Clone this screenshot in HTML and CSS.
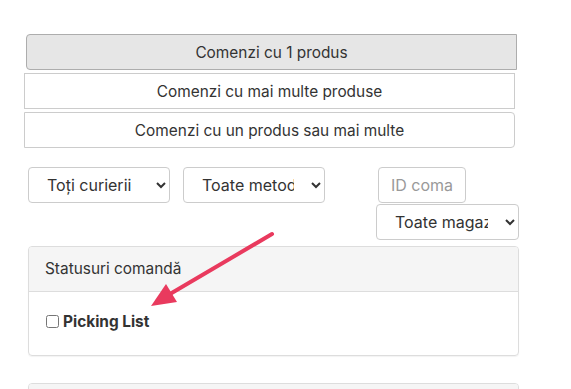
FILE: index.html
```html
<!DOCTYPE html>
<html lang="en">
<head>
    <meta charset="UTF-8">
    <meta name="viewport" content="width=device-width, initial-scale=1.0">
    <title>Comenzi</title>
    <link rel="stylesheet" href="styles.css">
</head>
<body>

    <div class="page">
        <div class="btn-group">
            <button class="btn active">Comenzi cu 1 produs</button>
            <button class="btn">Comenzi cu mai multe produse</button>
            <button class="btn last">Comenzi cu un produs sau mai multe</button>
        </div>

        <div class="filters">
            <select class="field courier">
                <option>Toți curierii</option>
            </select>
            <select class="field method">
                <option>Toate metodele</option>
            </select>
            <div class="filter-stack">
                <input type="text" class="field order-id" placeholder="ID comanda">
                <select class="field shop">
                    <option>Toate magazinele</option>
                </select>
            </div>
        </div>

        <div class="card">
            <div class="card-header">Statusuri comandă</div>
            <div class="card-body">
                <label class="check"><input type="checkbox"> Picking List</label>
            </div>
        </div>

        <div class="card next">
            <div class="card-header">&nbsp;</div>
        </div>

        <!-- annotation arrow pointing at the checkbox -->
        <svg class="arrow" width="140" height="90" viewBox="0 0 140 90">
            <line x1="132" y1="9" x2="30" y2="69" stroke="#e93a5e" stroke-width="4" stroke-linecap="round"/>
            <polygon points="11,81 37,77 26,59" fill="#e93a5e"/>
        </svg>
    </div>

</body>
</html>
```

FILE: styles.css
```css
* {
  box-sizing: border-box;
}

body {
  margin: 0;
  background: #fff;
  color: #333;
  font-family: Inter, "Noto Sans", sans-serif;
  font-size: 15.4px;
}

.page {
  position: relative;
  height: 389px;
  overflow: hidden;
  padding: 34px 0 0 24px;
}

.btn-group {
  display: flex;
  flex-direction: column;
  gap: 3px;
}

.btn {
  display: block;
  width: 491px;
  height: 36px;
  padding: 6px 12px;
  background: #fff;
  border: 1px solid #ccc;
  border-radius: 0;
  color: #333;
  font-family: inherit;
  font-size: 15.4px;
  text-align: center;
}

.btn.active {
  margin-left: 2px;
  background: #e6e6e6;
  border-color: #adadad;
  border-radius: 4px 0 0 4px;
}

.btn.last {
  border-radius: 0 4px 4px 0;
}

.filters {
  display: flex;
  align-items: flex-start;
  padding: 19px 0 0 4px;
}

.field {
  flex-shrink: 0;
  height: 36px;
  border: 1px solid #ccc;
  border-radius: 4px;
  background: #fff;
  color: #333;
  font-family: inherit;
  font-size: 16px;
}

select.field {
  padding: 0 14px 0 14px;
}

.courier {
  width: 142px;
}

.method {
  width: 142px;
  margin-left: 13px;
}

.filter-stack {
  flex-shrink: 0;
  display: flex;
  flex-direction: column;
  align-items: flex-start;
  gap: 1px;
  margin-left: 51px;
}

.order-id {
  width: 88px;
  margin-left: 2px;
  padding: 0 12px;
}

.order-id::placeholder {
  color: #999;
}

.shop {
  width: 143px;
}

.card {
  width: 491px;
  margin: 6px 0 0 4px;
  border: 1px solid #ddd;
  border-radius: 4px;
  box-shadow: 0 1px 1px rgba(0, 0, 0, .05);
}

.card-header {
  height: 45px;
  padding: 12px 16px;
  background: #f5f5f5;
  border-bottom: 1px solid #ddd;
  border-radius: 3px 3px 0 0;
}

.card-body {
  padding: 20px 16px 25px 17px;
  height: 63px;
}

.check {
  display: flex;
  align-items: center;
  gap: 4px;
  font-weight: bold;
}

.check input {
  width: 13px;
  height: 13px;
  margin: 0;
}

.card.next {
  margin-top: 27px;
}

.arrow {
  position: absolute;
  left: 140px;
  top: 225px;
}
```
